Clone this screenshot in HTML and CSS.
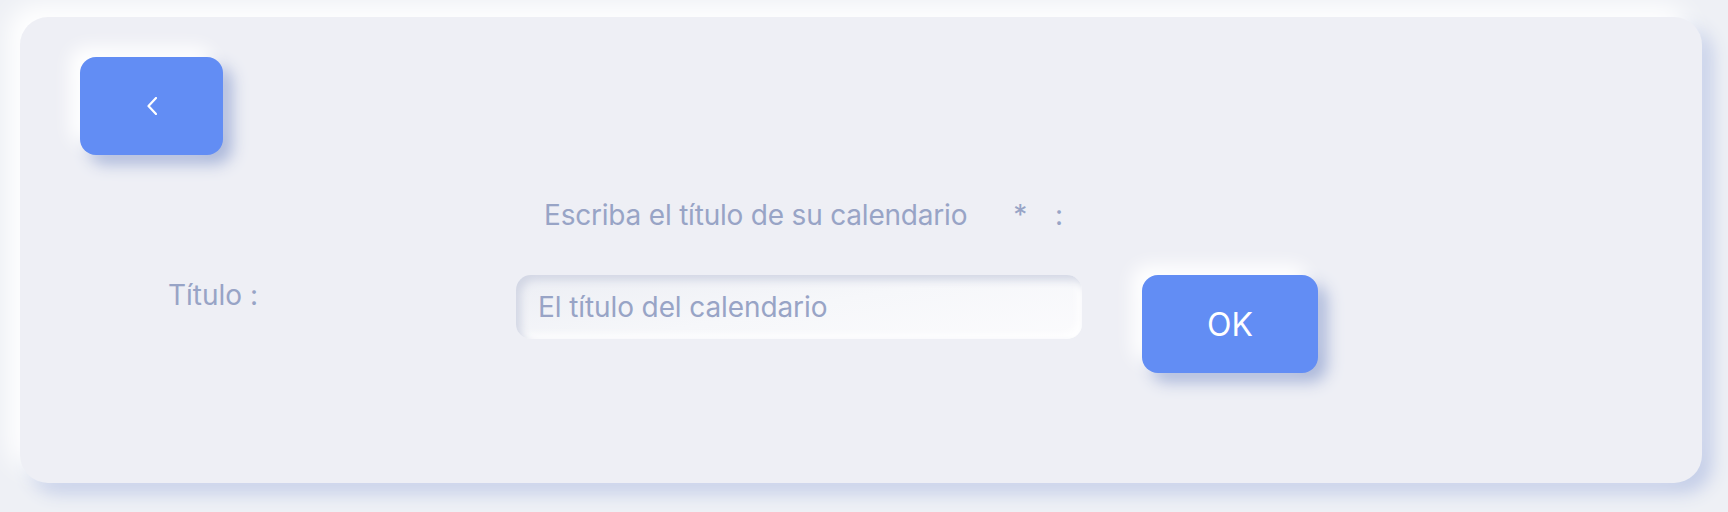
FILE: index.html
```html
<!DOCTYPE html>
<html lang="es">
<head>
<meta charset="utf-8">
<title>Calendario</title>
<link rel="stylesheet" href="styles.css">
</head>
<body>
<div class="card">
  <button class="back" type="button" aria-label="Volver">
    <svg width="10" height="18" viewBox="0 0 10 18"><polyline points="9,1 1.5,9 9,17" fill="none" stroke="#fff" stroke-width="2.2" stroke-linecap="round" stroke-linejoin="round"/></svg>
  </button>
  <form class="form">
    <div class="title-row">
      <span class="title-text">Escriba el título de su calendario</span>
      <span class="star">*</span>
      <span class="colon">:</span>
    </div>
    <label class="label" for="t">Título :</label>
    <input class="input" id="t" type="text" placeholder="El título del calendario">
    <button class="ok" type="button">OK</button>
  </form>
</div>
</body>
</html>
```
FILE: styles.css
```css
html, body {
  margin: 0;
  padding: 0;
  background: #eef0f5;
}
body {
  padding: 17px 26px 29px 20px;
  font-family: Inter, "Noto Sans", sans-serif;
  color: #98a4c6;
}
.card {
  height: 466px;
  box-sizing: border-box;
  background: #eeeff5;
  border-radius: 28px;
  padding: 40px 60px;
  box-shadow: -12px -12px 24px #ffffff, 10px 10px 18px #c3cde8;
}
.back {
  display: flex;
  align-items: center;
  justify-content: center;
  width: 143px;
  height: 98px;
  border: 0;
  padding: 0;
  border-radius: 16px;
  background: #628df4;
  box-shadow: -10px -10px 18px #ffffff, 9px 9px 16px #aab7da;
  cursor: pointer;
}
.form {
  display: grid;
  grid-template-columns: 376px 566px 176px;
  column-gap: 60px;
  row-gap: 43px;
  margin-top: 43px;
  align-items: start;
}
.form > * {
  margin: 0;
}
.title-row {
  grid-column: 2 / 4;
  display: flex;
  align-items: baseline;
  padding-left: 28px;
  font-size: 28px;
  line-height: 34px;
  font-weight: 400;
  letter-spacing: -0.2px;
}
.star {
  margin-left: 46px;
}
.colon {
  margin-left: 28px;
}
.label {
  padding: 3px 0 0 88px;
  font-size: 28px;
  line-height: 34px;
}
.input {
  box-sizing: border-box;
  width: 566px;
  height: 64px;
  border: 0;
  outline: none;
  border-radius: 15px;
  padding: 0 22px;
  font-family: Inter, "Noto Sans", sans-serif;
  font-size: 28px;
  letter-spacing: -0.1px;
  color: #98a4c6;
  background: linear-gradient(170deg, #eceef4 0%, #f6f7fa 50%, #fbfbfd 100%);
  box-shadow: inset 5px 5px 8px #d2d6e4, inset -4px -4px 8px #ffffff;
}
.input::placeholder {
  color: #98a4c6;
  opacity: 1;
}
.ok {
  width: 176px;
  height: 98px;
  border: 0;
  border-radius: 16px;
  background: #628df4;
  color: #ffffff;
  font-family: Inter, "Noto Sans", sans-serif;
  font-size: 32px;
  font-weight: 400;
  box-shadow: -10px -10px 18px #ffffff, 9px 9px 16px #aab7da;
  cursor: pointer;
}
```
